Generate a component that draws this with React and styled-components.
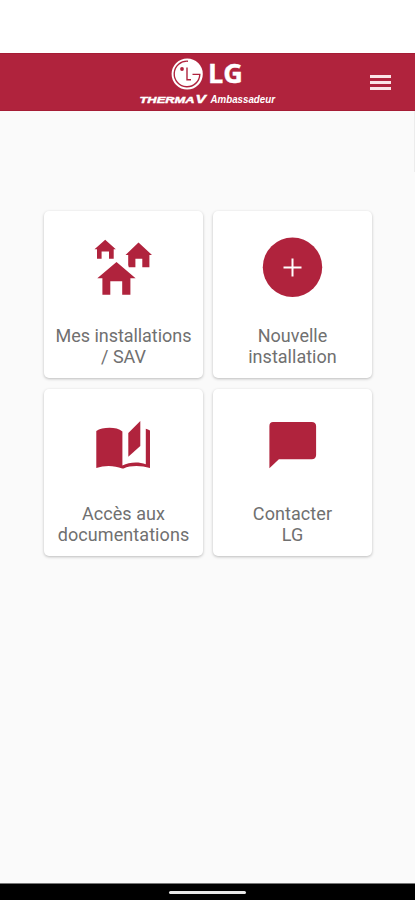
import React from 'react'
import styled, { createGlobalStyle } from 'styled-components';

const RED = '#b0233d';

const tiles = [
  { id: 1, icon: HousesIcon, lines: ['Mes installations', '/ SAV'], spacing: '-0.05px' },
  { id: 2, icon: PlusIcon, lines: ['Nouvelle', 'installation'], spacing: '0.02px' },
  { id: 3, icon: BookIcon, lines: ['Accès aux', 'documentations'], spacing: '0.08px' },
  { id: 4, icon: ChatIcon, lines: ['Contacter', 'LG'], spacing: '0.08px' },
];

export default function App() {
  return (
    <>
      <GlobalStyle />
      <Screen>
        <StatusBar />
        <Header>
          <Brand>
            <LogoRow>
              <LgMark />
              <Wordmark>LG</Wordmark>
            </LogoRow>
            <Tagline />
          </Brand>
          <MenuButton aria-label="Menu">
            <MenuLine />
            <MenuLine />
            <MenuLine />
          </MenuButton>
        </Header>
        <Content>
          <Grid>
            {tiles.map(({ id, icon: Icon, lines, spacing }) => (
              <Tile key={id}>
                <Icon />
                <Label $spacing={spacing}>
                  {lines.map(line => <span key={line}>{line}</span>)}
                </Label>
              </Tile>
            ))}
          </Grid>
          <ScrollThumb />
        </Content>
        <NavBar>
          <HomePill />
        </NavBar>
      </Screen>
    </>
  )
}

function LgMark() {
  return (
    <svg width="32" height="32" viewBox="0 0 32 32">
      <circle cx="16.2" cy="16" r="15.6" fill="#fff" />
      <g fill="none" stroke={RED} strokeWidth="1.4">
        <path d="M17 3.2A12.8 12.8 0 1 0 28.8 16.4H21.5" />
        <path d="M16 9.5V21.8H20" />
      </g>
      <circle cx="11" cy="11" r="1.9" fill={RED} />
    </svg>
  )
}

function Tagline() {
  return (
    <svg width="146" height="20" viewBox="0 0 146 20">
      <Therma x="1.5" y="13.3" $size="8.8px" textLength="55" lengthAdjust="spacingAndGlyphs">THERMA</Therma>
      <Therma x="57.5" y="13.3" $size="10.2px" textLength="10.5" lengthAdjust="spacingAndGlyphs">V</Therma>
      <Ambassador x="72.5" y="13.3" textLength="64.5" lengthAdjust="spacingAndGlyphs">Ambassadeur</Ambassador>
    </svg>
  )
}

function HousesIcon() {
  return (
    <svg width="65" height="60" viewBox="0 0 65 60" fill={RED}>
      <path d="M14.2 2.8L24.8 12.3H22.7V21.8H18V14.5H10.6V21.8H6V12.3H3.5Z" />
      <path d="M47.5 5.5L61 18H58.4V30.2H51.3V21.8H44.4V30.2H37.8L37.2 28V18H34.5Z" />
      <path d="M25.5 25L44.6 41.2H39.4V57.7H31.2V44.2H19.3V57.7H11.4V41.2H6.3Z" />
    </svg>
  )
}

function PlusIcon() {
  return (
    <svg width="65" height="60" viewBox="0 0 65 60">
      <circle cx="32.5" cy="30.2" r="29.7" fill={RED} />
      <path d="M32.5 21.4V39.4M23.5 30.4H41.5" stroke="#fff" strokeWidth="2" />
    </svg>
  )
}

function BookIcon() {
  return (
    <svg width="65" height="60" viewBox="0 0 65 60" fill={RED}>
      <path d="M5.3 16C11 12.2 25 11.2 31.4 16.4V50.6C38 47.2 47 46.2 54.8 49.3V13.7C56.3 14 57.7 14.6 59 15.5V53C50 50.2 39.5 50.2 32.6 53.4H31.2C23.5 50.3 13.5 50 5.3 53Z" />
      <path d="M37.3 18L49.3 6V31L37.3 41.8Z" />
    </svg>
  )
}

function ChatIcon() {
  return (
    <svg width="65" height="60" viewBox="0 0 65 60" fill={RED}>
      <path d="M13 7H51.8C54.3 7 56.1 8.5 56.1 11V39.9C56.1 42.5 54.3 44.2 51.8 44.2H18.9L9.4 53.3V11C9.4 8.5 10.8 7 13 7Z" />
    </svg>
  )
}

const GlobalStyle = createGlobalStyle`
  * {
    box-sizing: border-box;
  }
  body {
    margin: 0;
    background: #fafafa;
    font-family: Roboto, "Liberation Sans", sans-serif;
  }
`;

const Screen = styled.div`
  display: flex;
  flex-direction: column;
  height: 900px;
  overflow: hidden;
`;

const StatusBar = styled.div`
  height: 53px;
  background: #fff;
`;

const Header = styled.header`
  display: grid;
  grid-template-columns: 138px 146px 1fr;
  height: 58px;
  background: ${RED};
  border-top: 1px solid #a51c35;
  border-bottom: 1px solid #a51c35;
`;

const Brand = styled.div`
  grid-column: 2;
  display: flex;
  flex-direction: column;
  padding-top: 4px;
  svg {
    display: block;
    flex: none;
  }
`;

const LogoRow = styled.div`
  display: flex;
  align-items: center;
  gap: 5px;
  height: 32px;
  padding-left: 33px;
`;

const Wordmark = styled.span`
  margin-bottom: 3px;
  color: #fff;
  font: bold 27px/37px "Open Sans", sans-serif;
  -webkit-text-stroke: 0.4px #fff;
`;

const Therma = styled.text`
  fill: #fff;
  stroke: #fff;
  stroke-width: 0.4px;
  font: italic bold ${props => props.$size} "Liberation Sans", sans-serif;
`;

const Ambassador = styled.text`
  fill: #fff;
  font: italic bold 10.5px "Liberation Sans", sans-serif;
`;

const MenuButton = styled.button`
  justify-self: end;
  align-self: start;
  display: flex;
  flex-direction: column;
  gap: 3px;
  margin: 21px 24px 0 0;
  padding: 0;
  border: 0;
  background: none;
`;

const MenuLine = styled.span`
  width: 21px;
  height: 3px;
  background: #fbe4e7;
`;

const Content = styled.main`
  display: flex;
  flex: 1;
  justify-content: space-between;
  background: #fafafa;
`;

const Grid = styled.div`
  display: grid;
  grid-template-columns: 159px 159px;
  grid-auto-rows: 167px;
  gap: 11px 10px;
  margin: 100px 0 0 44px;
`;

const Tile = styled.div`
  display: flex;
  flex-direction: column;
  align-items: center;
  padding-top: 26px;
  border-radius: 5px;
  background: #fff;
  box-shadow: 0 1px 3px rgba(0, 0, 0, 0.25);
`;

const Label = styled.div`
  display: flex;
  flex-direction: column;
  align-items: center;
  margin-top: 28px;
  color: #707070;
  font-size: 18px;
  line-height: 21px;
  letter-spacing: ${props => props.$spacing};
  white-space: nowrap;
`;

const ScrollThumb = styled.div`
  width: 1px;
  height: 61px;
  background: #ececec;
`;

const NavBar = styled.footer`
  display: flex;
  justify-content: center;
  height: 17px;
  padding-top: 7px;
  border-top: 1px solid #777;
  background: #000;
`;

const HomePill = styled.div`
  width: 77px;
  height: 3px;
  border-radius: 2px;
  background: #e8e8e8;
`;
